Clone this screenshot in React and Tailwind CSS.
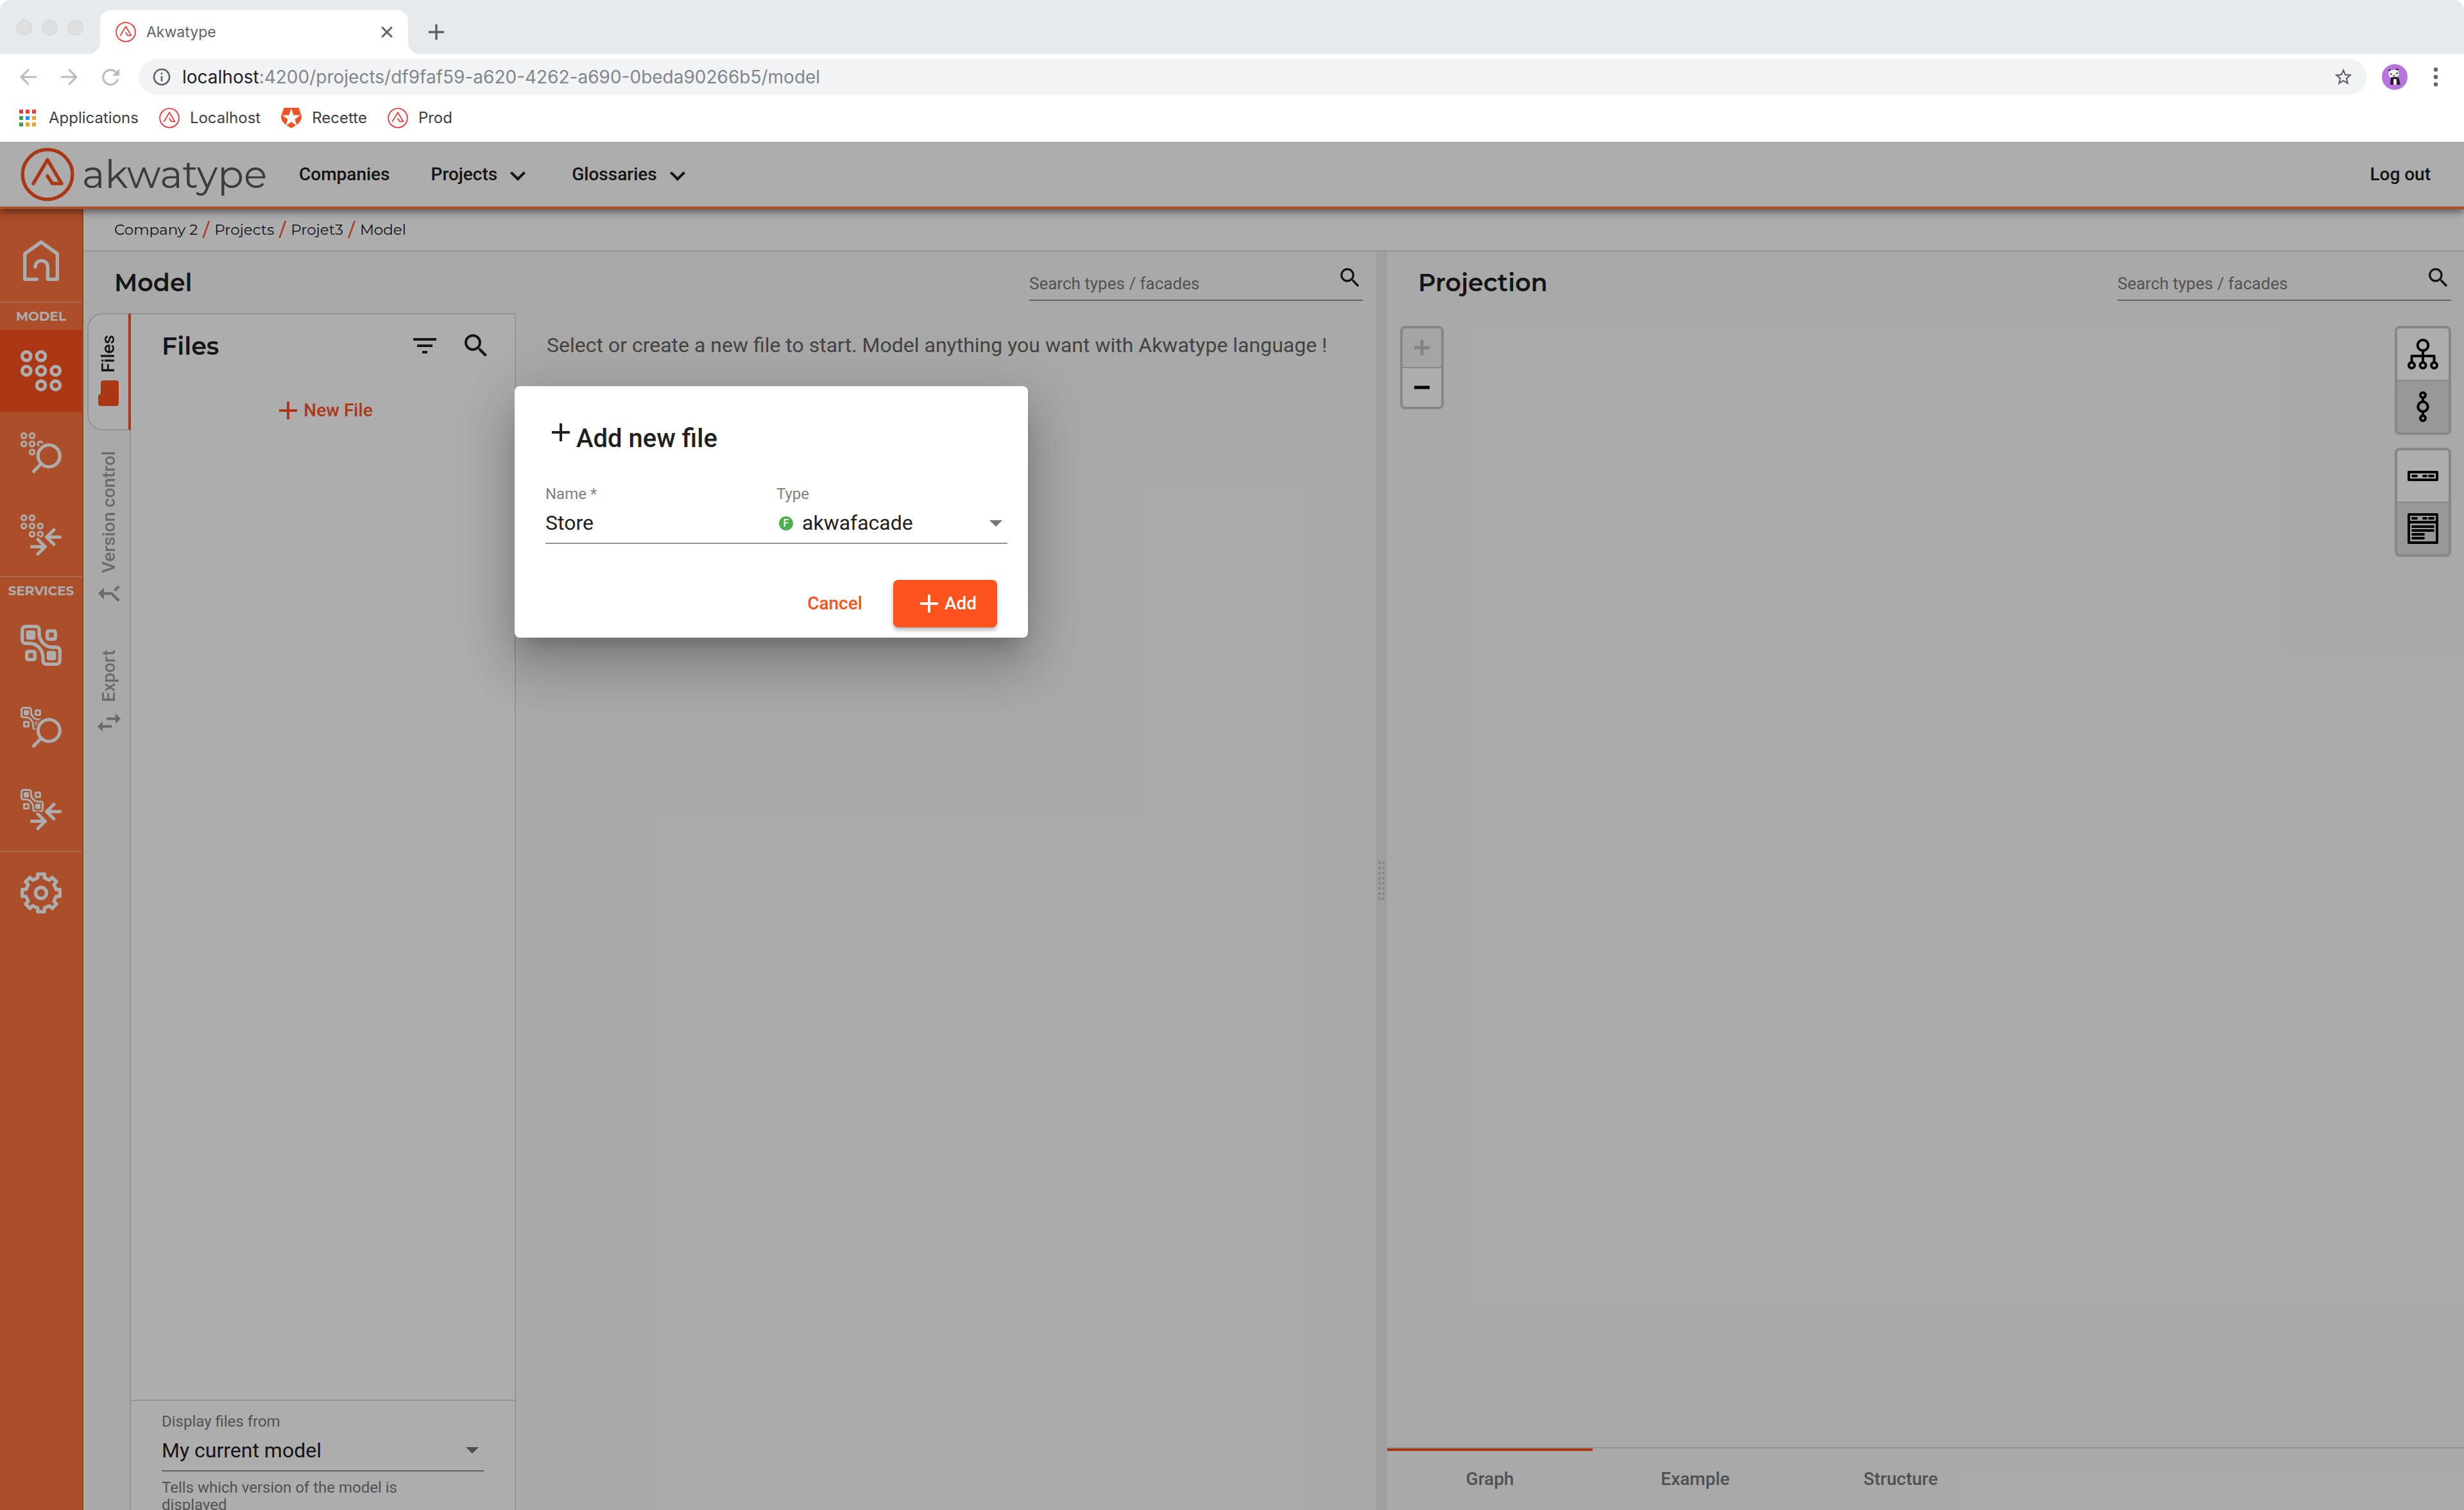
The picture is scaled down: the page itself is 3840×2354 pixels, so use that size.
import React, { useId } from "react";

const titleFont = "font-['Montserrat','Inter',sans-serif]";

/* ---------- drawings ---------- */

function BrandMark({ className, stroke }) {
  return (
    <svg className={className} viewBox="-43 -43 86 86" fill="none" stroke="currentColor" strokeWidth={stroke} strokeLinecap="round" strokeLinejoin="round" aria-hidden="true">
      <circle r={42.5 - stroke / 2} />
      <path d="M-22.5 14.5 0-23.5 22.5 14.5H8L0 2.5" />
    </svg>
  );
}

function Material({ d, className }) {
  return (
    <svg className={className} viewBox="0 0 24 24" fill="currentColor" aria-hidden="true">
      <path d={d} />
    </svg>
  );
}

const paths = {
  search:
    "M15.5 14h-.79l-.28-.27A6.47 6.47 0 0 0 16 9.5 6.5 6.5 0 1 0 9.5 16c1.61 0 3.09-.59 4.23-1.57l.27.28v.79l5 4.99L20.49 19l-4.99-5zm-6 0C7.01 14 5 11.99 5 9.5S7.01 5 9.5 5 14 7.01 14 9.5 11.99 14 9.5 14z",
  filter: "M10 18h4v-2h-4v2zM3 6v2h18V6H3zm3 7h12v-2H6v2z",
  chevron: "M7.41 8.59 12 13.17l4.59-4.58L18 10l-6 6-6-6 1.41-1.41z",
  folder: "M10 4H4c-1.1 0-1.99.9-1.99 2L2 18c0 1.1.9 2 2 2h16c1.1 0 2-.9 2-2V8c0-1.1-.9-2-2-2h-8l-2-2z",
  merge: "M17 20.41 18.41 19 15 15.59 13.59 17 17 20.41zM7.5 8H11v5.59L5.59 19 7 20.41l6-6V8h3.5L12 3.5 7.5 8z",
  importExport: "M9 3 5 6.99h3V14h2V6.99h3L9 3zm7 14.01V10h-2v7.01h-3L15 21l4-3.99h-3z",
  info: "M11 7h2v2h-2zm0 4h2v6h-2zm1-9C6.48 2 2 6.48 2 12s4.48 10 10 10 10-4.48 10-10S17.52 2 12 2zm0 18c-4.41 0-8-3.59-8-8s3.59-8 8-8 8 3.59 8 8-3.59 8-8 8z",
  star: "M22 9.24l-7.19-.62L12 2 9.19 8.63 2 9.24l5.46 4.73L5.82 21 12 17.27 18.18 21l-1.63-7.03L22 9.24zM12 15.4l-3.76 2.27 1-4.28-3.32-2.88 4.38-.38L12 6.1l1.71 4.04 4.38.38-3.32 2.88 1 4.28L12 15.4z",
};

function Plus({ className }) {
  return (
    <svg className={className} viewBox="0 0 48 48" fill="none" stroke="currentColor" strokeWidth="4" aria-hidden="true">
      <path d="M24 10v28M10 24h28" />
    </svg>
  );
}

const dots = [[9.3, 9.3], [32, 9.3], [9.3, 32], [32, 32], [54.7, 32], [32, 54.7], [54.7, 54.7]];
function Dots() {
  return dots.map(([x, y]) => <circle key={`${x}-${y}`} cx={x} cy={y} r="6.7" strokeWidth="5.3" />);
}

function Blocks() {
  return (
    <g strokeWidth="5.3">
      <path d="M8 2.7H24a5 5 0 0 1 5 5V13C29 25 38 35 50 35H56a5 5 0 0 1 5.3 5V56a5 5 0 0 1-5 5.3H40a5 5 0 0 1-5-5V51C35 39 26 29 14 29H8a5 5 0 0 1-5.300-5V8A5 5 0 0 1 8 2.7z" />
      <rect x="41.7" y="9.7" width="12.6" height="12.6" rx="2" />
      <rect x="9.7" y="41.7" width="12.6" height="12.6" rx="2" />
      <rect x="8.7" y="8.7" width="14.6" height="14.6" rx="3" fill="currentColor" stroke="none" />
      <rect x="40.7" y="40.7" width="14.6" height="14.6" rx="3" fill="currentColor" stroke="none" />
    </g>
  );
}

function Home() {
  return <path strokeWidth="5.3" d="M25.5 61.3H6.7V21.5L32 3.5l25.3 18V61.3H42.3V41a9.7 9.7 0 0 0-19.3 0v1" />;
}

const gearPath = (() => {
  const pts = [];
  for (let k = 0; k < 8; k++) {
    const a = (k * Math.PI) / 4;
    for (const [x, y] of [[-5.3, -23.5], [-5.3, -29.3], [5.3, -29.3], [5.3, -23.5]]) {
      const px = x * (k % 2 ? 0.9 : 1);
      pts.push(`${(32 + px * Math.cos(a) - y * Math.sin(a)).toFixed(1)} ${(32 + px * Math.sin(a) + y * Math.cos(a)).toFixed(1)}`);
    }
  }
  return `M${pts.join("L")}Z`;
})();

function Gear() {
  return (
    <g strokeWidth="5.3">
      <path d={gearPath} />
      <circle cx="32" cy="32" r="8.5" />
    </g>
  );
}

function Lens({ w = 5 }) {
  return (
    <g strokeWidth={w}>
      <circle cx="44.3" cy="36.7" r="17" />
      <path d="M32 49 20.5 61" />
    </g>
  );
}

function Arrows({ w = 5 }) {
  return (
    <path strokeWidth={w} d="M61.5 35.3H41M52 24 40.5 35.3 52 46.5M17.5 50.3H38M27 39 38.5 50.3 27 61.5" />
  );
}

function Composite({ Base, Over, solid }) {
  const id = useId();
  return (
    <>
      <mask id={id} maskUnits="userSpaceOnUse" x="0" y="0" width="64" height="64">
        <rect width="64" height="64" fill="white" stroke="none" />
        <g stroke="black">
          <Over w={10} />
          {solid && <circle cx="44.3" cy="36.7" r="18" fill="black" />}
        </g>
      </mask>
      <g mask={`url(#${id})`}>
        <g transform="scale(.5625)">
          <Base />
        </g>
      </g>
      <Over />
    </>
  );
}

function SideItem({ label, active, children }) {
  return (
    <a href="#" aria-label={label} className={`flex h-32 shrink-0 items-center justify-center ${active ? "bg-[#fc511e]" : ""}`}>
      <svg className="size-16" viewBox="0 0 64 64" fill="none" stroke="currentColor" strokeLinecap="round" strokeLinejoin="round" aria-hidden="true">
        {children}
      </svg>
    </a>
  );
}

function SideLabel({ children }) {
  return (
    <div className={`flex h-11 shrink-0 items-center justify-center border-t-2 border-white/30 text-[20px] font-bold ${titleFont}`}>{children}</div>
  );
}

/* ---------- browser chrome ---------- */

function Recette() {
  return (
    <svg className="size-8" viewBox="0 0 32 32" aria-hidden="true">
      <path fill="#eb5424" d="M4.5 0h23L32 13c0 9-6 13-16 19C6 26 0 22 0 13z" />
      <path fill="#fff" d="M16 1l3.500 10.500H30l-8.500 6.500 3.200 10L16 22 7.300 28l3.200-10L2 11.500h10.500z" />
    </svg>
  );
}

const appColors = ["#f03a37", "#f03a37", "#f03a37", "#3c9c52", "#2a8cf4", "#efa22c", "#3c9c52", "#efa22c", "#efa22c"];

function Bookmark({ icon, children }) {
  return (
    <a href="#" className="flex items-center gap-4">
      {icon}
      {children}
    </a>
  );
}

function Browser() {
  return (
    <div className="shrink-0 bg-white font-['Inter',sans-serif] text-[#5f6368]">
      <div className="flex h-[84px] items-start rounded-t-2xl bg-[#e6eaed] pl-[26px]">
        <div className="mt-[31px] flex gap-4">
          <span className="size-6 rounded-full border border-[#d0d0d0] bg-[#dfdfdf]" />
          <span className="size-6 rounded-full border border-[#d0d0d0] bg-[#dfdfdf]" />
          <span className="size-6 rounded-full border border-[#d0d0d0] bg-[#dfdfdf]" />
        </div>
        <div className="mt-4 ml-2 flex h-[68px] items-end">
          <svg className="size-[18px] text-white" viewBox="0 0 18 18" aria-hidden="true"><path fill="currentColor" d="M18 0v18H0A18 18 0 0 0 18 0z" /></svg>
          <div className="flex h-full w-[480px] items-center rounded-t-2xl bg-white px-6">
            <BrandMark className="size-8 text-[#e53f3f]" stroke={5} />
            <span className="ml-4 flex-1 text-[23px]">Akwatype</span>
            <button aria-label="Close tab">
              <svg className="size-[18px]" viewBox="0 0 18 18" stroke="currentColor" strokeWidth="3" strokeLinecap="round"><path d="M2 2l14 14M16 2 2 16" /></svg>
            </button>
          </div>
          <svg className="size-[18px] text-white" viewBox="0 0 18 18" aria-hidden="true"><path fill="currentColor" d="M0 0v18h18A18 18 0 0 1 0 0z" /></svg>
        </div>
        <button aria-label="New tab" className="mt-[38px] ml-[14px]">
          <svg className="size-6" viewBox="0 0 24 24" stroke="currentColor" strokeWidth="3.5"><path d="M12 0v24M0 12h24" /></svg>
        </button>
      </div>
      <div className="flex h-[72px] items-center pr-8 pl-[30px]">
        <div className="flex w-[186px] items-center gap-9 text-[#b9bbbd]">
          <button aria-label="Back"><svg className="size-7" viewBox="0 0 28 28" fill="none" stroke="currentColor" strokeWidth="3" strokeLinecap="round"><path d="M26 14H3M14 3 3 14l11 11" /></svg></button>
          <button aria-label="Forward"><svg className="size-7" viewBox="0 0 28 28" fill="none" stroke="currentColor" strokeWidth="3" strokeLinecap="round"><path d="M2 14h23M14 3l11 11-11 11" /></svg></button>
          <button aria-label="Reload"><svg className="size-7" viewBox="0 0 28 28" fill="none" stroke="currentColor" strokeWidth="3" strokeLinecap="round"><path d="M25 18.5A11.5 11.5 0 1 1 22 6" /><path d="M28 1v11H17z" fill="currentColor" stroke="none" /></svg></button>
        </div>
        <div className="flex h-14 flex-1 items-center rounded-full bg-[#f1f3f4] px-5">
          <Material d={paths.info} className="size-8" />
          <div className="ml-4 flex-1 text-[28px] text-[#80868b]">
            <span className="text-[#202124]">localhost</span>:4200/projects/df9faf59-a620-4262-a690-0beda90266b5/model
          </div>
          <button aria-label="Bookmark this page"><Material d={paths.star} className="size-8" /></button>
        </div>
        <button aria-label="Profile" className="ml-6">
          <svg className="size-10" viewBox="0 0 40 40">
            <circle cx="20" cy="20" r="20" fill="#b673dd" />
            <circle cx="12.5" cy="10" r="2" fill="#222" /><circle cx="23.5" cy="8.500" r="2" fill="#222" />
            <rect x="10.5" y="9" width="16" height="12" rx="5" fill="#eee" transform="rotate(-6 18 15)" />
            <path d="M13 15l3 1M22 15l3-1.500M17.500 18q1.500 1 3-.2" stroke="#222" strokeWidth="1.4" fill="none" />
            <path d="M14 21q6-2 12 0l3 11h-6l-1-8h-3l-1 8h-5z" fill="#221c26" />
            <rect x="18" y="23" width="5" height="9" rx="2" fill="#eee" />
          </svg>
        </button>
        <button aria-label="Menu" className="ml-8">
          <svg className="h-[30px] w-6" viewBox="0 0 24 30" fill="currentColor"><circle cx="12" cy="3.5" r="3.2" /><circle cx="12" cy="15" r="3.2" /><circle cx="12" cy="26.5" r="3.2" /></svg>
        </button>
      </div>
      <div className="flex h-[65px] items-center gap-8 pb-[10px] pl-[30px] text-[24px] text-[#3c4043]">
        <Bookmark
          icon={
            <span className="mr-1 grid grid-cols-3 gap-1">
              {appColors.map((c, i) => (
                <span key={i} className="size-[6px]" style={{ backgroundColor: c }} />
              ))}
            </span>
          }
        >
          Applications
        </Bookmark>
        <Bookmark icon={<BrandMark className="size-8 text-[#e53f3f]" stroke={5} />}>Localhost</Bookmark>
        <Bookmark icon={<Recette />}>Recette</Bookmark>
        <Bookmark icon={<BrandMark className="size-8 text-[#e53f3f]" stroke={5} />}>Prod</Bookmark>
      </div>
    </div>
  );
}

/* ---------- application ---------- */

function SearchField() {
  return (
    <div className="flex h-[58px] w-[520px] items-start border-b-2 border-[#929292]">
      <input aria-label="Search types / facades" placeholder="Search types / facades" className="h-14 min-w-0 flex-1 bg-transparent pt-1.5 text-[26px] text-[#222] outline-none placeholder:text-[#7a7a7a]" />
      <Material d={paths.search} className="mt-0.5 size-10 text-[#202020]" />
    </div>
  );
}

function VerticalTab({ children, d, active }) {
  return (
    <button
      className={`relative flex w-[68px] shrink-0 rotate-180 items-center gap-2 pt-8 pb-8 text-[28px] font-medium [writing-mode:vertical-rl] ${
        active ? "z-10 rounded-r-3xl border-2 border-l-4 border-[#dadada] border-l-[#fc511e] bg-white text-[#202020]" : "text-[#9d9d9d]"
      }`}
    >
      <Material d={d} className={`size-12 rotate-90 ${active ? "text-[#fc511e]" : ""}`} />
      {children}
    </button>
  );
}

function Toggle({ label, pressed, children }) {
  return (
    <button aria-label={label} aria-pressed={pressed} className={`flex size-20 items-center justify-center ${pressed ? "bg-[#e0e0e0]" : "bg-white"}`}>
      <svg className="size-12" viewBox="0 0 48 48" fill="none" stroke="#000" strokeWidth="4" strokeLinecap="round" strokeLinejoin="round" aria-hidden="true">
        {children}
      </svg>
    </button>
  );
}

function AppHeader() {
  const link = "flex items-center gap-3";
  return (
    <header className="relative z-20 flex h-[105px] shrink-0 items-center border-b-4 border-[#fd733e] bg-white pr-[52px] pl-8 text-[28px] font-medium text-[#202020] shadow-[0_4px_12px_rgba(0,0,0,0.5)]">
      <BrandMark className="size-[84px] text-[#fc511e]" stroke={5.5} />
      <span className={`ml-3 w-[338px] text-[60px] leading-[72px] font-normal text-[#585858] ${titleFont}`}>akwatype</span>
      <nav className="flex flex-1 items-center gap-16">
        <a href="#" className={link}>Companies</a>
        <button className={link}>Projects<Material d={paths.chevron} className="mt-1 -mr-1 -ml-1 size-12" /></button>
        <button className={link}>Glossaries<Material d={paths.chevron} className="mt-1 -mr-1 -ml-1 size-12" /></button>
      </nav>
      <a href="#">Log out</a>
    </header>
  );
}

function Sidebar() {
  return (
    <nav aria-label="Sections" className="flex w-[130px] shrink-0 flex-col border-r-2 border-[#e0602f] bg-[#fd733e] pt-4 text-white">
      <SideItem label="Home"><Home /></SideItem>
      <SideLabel>MODEL</SideLabel>
      <SideItem label="Model editor" active><Dots /></SideItem>
      <SideItem label="Model search"><Composite Base={Dots} Over={Lens} solid /></SideItem>
      <SideItem label="Model compare"><Composite Base={Dots} Over={Arrows} /></SideItem>
      <SideLabel>SERVICES</SideLabel>
      <SideItem label="Services editor"><Blocks /></SideItem>
      <SideItem label="Services search"><Composite Base={Blocks} Over={Lens} solid /></SideItem>
      <SideItem label="Services compare"><Composite Base={Blocks} Over={Arrows} /></SideItem>
      <div className="border-t-2 border-white/30"><SideItem label="Settings"><Gear /></SideItem></div>
    </nav>
  );
}

function Breadcrumb() {
  const items = ["Company 2", "Projects", "Projet3", "Model"];
  return (
    <nav aria-label="Breadcrumb" className={`flex h-[66px] shrink-0 items-center border-b-2 border-[#dadada] bg-white pl-12 text-[23px] text-[#202020] ${titleFont}`}>
      {items.map((t, i) => (
        <React.Fragment key={t}>
          {i > 0 && <span className="mx-2 text-[28px] font-medium text-[#fc511e]">/</span>}
          <a href="#">{t}</a>
        </React.Fragment>
      ))}
    </nav>
  );
}

function FilesPanel() {
  return (
    <section className="flex w-[602px] shrink-0 flex-col border-2 border-b-0 border-[#dadada] bg-white">
      <div className="flex h-[98px] shrink-0 items-center gap-8 pr-9 pl-12">
        <h2 className={`flex-1 text-[38px] font-semibold text-[#202020] ${titleFont}`}>Files</h2>
        <button aria-label="Filter"><Material d={paths.filter} className="size-12 text-[#202020]" /></button>
        <button aria-label="Search files"><Material d={paths.search} className="size-12 text-[#202020]" /></button>
      </div>
      <div className="flex h-[104px] shrink-0 items-center justify-center">
        <button className="flex items-center text-[28px] font-medium text-[#fc511e]"><Plus className="size-12" />New File</button>
      </div>
      <div className="flex-1" />
      <div className="h-[172px] shrink-0 border-t-2 border-[#dadada] px-12 pt-[18px] text-[24px] text-[#7a7a7a]">
        <label htmlFor="display-from" className="block leading-7">Display files from</label>
        <div className="relative border-b-2 border-[#929292]">
          <select id="display-from" className="block h-[62px] w-full appearance-none bg-transparent text-[32px] text-[#202020] outline-none">
            <option>My current model</option>
          </select>
          <svg className="pointer-events-none absolute top-[26px] right-2 h-[10px] w-5" viewBox="0 0 20 10" fill="#757575" aria-hidden="true"><path d="M0 0h20L10 10z" /></svg>
        </div>
        <p className="max-w-[400px] pt-3 leading-[27px]">Tells which version of the model is displayed</p>
      </div>
    </section>
  );
}

function ModelPane() {
  return (
    <section className="flex min-w-0 flex-[2014] flex-col">
      <div className="flex h-24 shrink-0 items-center justify-between pr-5 pl-12">
        <h1 className={`text-[38px] font-semibold text-[#202020] ${titleFont}`}>Model</h1>
        <SearchField />
      </div>
      <div className="flex min-h-0 flex-1">
        <div className="-mr-[2px] flex w-[74px] shrink-0 flex-col items-end">
          <VerticalTab d={paths.folder} active>Files</VerticalTab>
          <VerticalTab d={paths.merge}>Version control</VerticalTab>
          <VerticalTab d={paths.importExport}>Export</VerticalTab>
        </div>
        <FilesPanel />
        <p className="pt-7 pl-12 text-[32px] leading-[44px] text-[#646464]">Select or create a new file to start. Model anything you want with Akwatype language !</p>
      </div>
    </section>
  );
}

function ProjectionPane() {
  const tab = "flex w-80 items-center justify-center border-t-4 pb-1";
  return (
    <section className="flex min-w-0 flex-[1678] flex-col">
      <div className="flex h-24 shrink-0 items-center justify-between pr-5 pl-12">
        <h1 className={`text-[38px] font-semibold text-[#202020] ${titleFont}`}>Projection</h1>
        <SearchField />
      </div>
      <div className="flex flex-1 items-start justify-between px-5 pt-5">
        <div className="flex flex-col gap-[2px] overflow-hidden rounded-lg border-4 border-[#c8c8c8] bg-[#c8c8c8]">
          <button disabled aria-label="Zoom in" className="flex size-[60px] items-center justify-center bg-[#f4f4f4] text-[#c2c2c2]">
            <svg className="size-6" viewBox="0 0 24 24" stroke="currentColor" strokeWidth="5"><path d="M12 0v24M0 12h24" /></svg>
          </button>
          <button aria-label="Zoom out" className="flex size-[60px] items-center justify-center bg-white text-black">
            <svg className="size-6" viewBox="0 0 24 24" stroke="currentColor" strokeWidth="5"><path d="M0 12h24" /></svg>
          </button>
        </div>
        <div className="flex flex-col gap-5">
          <div className="flex flex-col gap-[2px] overflow-hidden rounded-lg border-4 border-[#c8c8c8] bg-[#c8c8c8]">
            <Toggle label="Tree layout">
              <circle cx="24" cy="10.3" r="8.3" />
              <path d="M24 19v18M6.500 37V27h35v10" />
              <circle cx="6.5" cy="41.5" r="4.5" /><circle cx="24" cy="41.5" r="4.5" /><circle cx="41.5" cy="41.5" r="4.5" />
            </Toggle>
            <Toggle label="Linear layout" pressed>
              <circle cx="24" cy="6" r="4" /><circle cx="24" cy="24" r="7.7" /><circle cx="24" cy="42" r="4" />
              <path d="M24 10v6M24 32v6" />
            </Toggle>
          </div>
          <div className="flex flex-col gap-[2px] overflow-hidden rounded-lg border-4 border-[#c8c8c8] bg-[#c8c8c8]">
            <Toggle label="Compact nodes">
              <path d="M2 18h44v12H2zM8 24h6M25 24h4M34 24h6" />
            </Toggle>
            <Toggle label="Detailed nodes" pressed>
              <path d="M2 2h44v44H2zM2 14h44M8 8h6M25 8h4M34 8h6M8 21h32M8 27h32M8 33h17M8 39h17" />
            </Toggle>
          </div>
        </div>
      </div>
      <div className="flex h-[98px] shrink-0 border-t-2 border-[#dadada] text-[28px] font-medium text-[#767676]">
        <button className={`${tab} border-[#fc511e]`}>Graph</button>
        <button className={`${tab} border-transparent`}>Example</button>
        <button className={`${tab} border-transparent`}>Structure</button>
      </div>
    </section>
  );
}

function AddFileDialog() {
  return (
    <div
      role="dialog"
      aria-labelledby="dialog-title"
      className="absolute top-[381px] left-[802px] z-40 w-[800px] rounded-lg bg-white px-12 pb-4 text-[#202020] shadow-[0_22px_30px_-14px_rgba(0,0,0,0.2),0_48px_76px_6px_rgba(0,0,0,0.14),0_18px_92px_16px_rgba(0,0,0,0.12)]"
    >
      <div className="flex items-start pt-12">
        <Plus className="size-12" />
        <h2 id="dialog-title" className="pt-2 text-[40px] leading-[52px] font-medium">Add new file</h2>
      </div>
      <div className="-mr-4 mt-11 grid grid-cols-2 border-b-2 border-[#949494]">
        <div>
          <label htmlFor="file-name" className="block text-[24px] leading-8 text-[#7f7f7f]">Name *</label>
          <input id="file-name" defaultValue="Store" className="block h-[60px] w-full bg-transparent pb-0.5 text-[32px] outline-none" />
        </div>
        <div>
          <label htmlFor="file-type" className="block text-[24px] leading-8 text-[#7f7f7f]">Type</label>
          <div className="relative flex items-center">
            <span className="pointer-events-none absolute left-1 flex size-[22px] items-center justify-center rounded-full bg-[#4caf50] text-[16px] leading-none font-medium text-white">F</span>
            <select id="file-type" defaultValue="akwafacade" className="block h-[60px] w-full appearance-none bg-transparent pb-0.5 pl-10 text-[32px] outline-none">
              <option>akwafacade</option>
            </select>
            <svg className="pointer-events-none absolute right-2 h-[10px] w-5" viewBox="0 0 20 10" fill="#757575" aria-hidden="true"><path d="M0 0h20L10 10z" /></svg>
          </div>
        </div>
      </div>
      <div className="mt-14 flex items-center justify-end gap-12 text-[28px] font-medium">
        <button className="text-[#fc511e]">Cancel</button>
        <button className="flex h-[74px] items-center rounded-lg bg-[#fe521f] px-8 text-white shadow-[0_4px_6px_rgba(0,0,0,0.3)]">
          <Plus className="size-12" />
          Add
        </button>
      </div>
    </div>
  );
}

export default function App() {
  return (
    <div className="flex h-screen flex-col overflow-hidden bg-white font-['Roboto',sans-serif]">
      <Browser />
      <div className="relative flex min-h-0 flex-1 flex-col overflow-hidden bg-[#fafafa]">
        <AppHeader />
        <div className="flex min-h-0 flex-1">
          <Sidebar />
          <div className="flex min-w-0 flex-1 flex-col">
            <Breadcrumb />
            <main className="flex min-h-0 flex-1">
              <ModelPane />
              <div role="separator" aria-orientation="vertical" className="flex w-[18px] shrink-0 items-center justify-center bg-[#ebebeb]">
                <span className="grid grid-cols-2 gap-x-[2px] gap-y-1">
                  {Array.from({ length: 16 }, (_, i) => (
                    <span key={i} className="size-1 bg-[#c8c8c8]" />
                  ))}
                </span>
              </div>
              <ProjectionPane />
            </main>
          </div>
        </div>
        <div className="absolute inset-0 z-30 bg-black/32" />
        <AddFileDialog />
      </div>
    </div>
  );
}
